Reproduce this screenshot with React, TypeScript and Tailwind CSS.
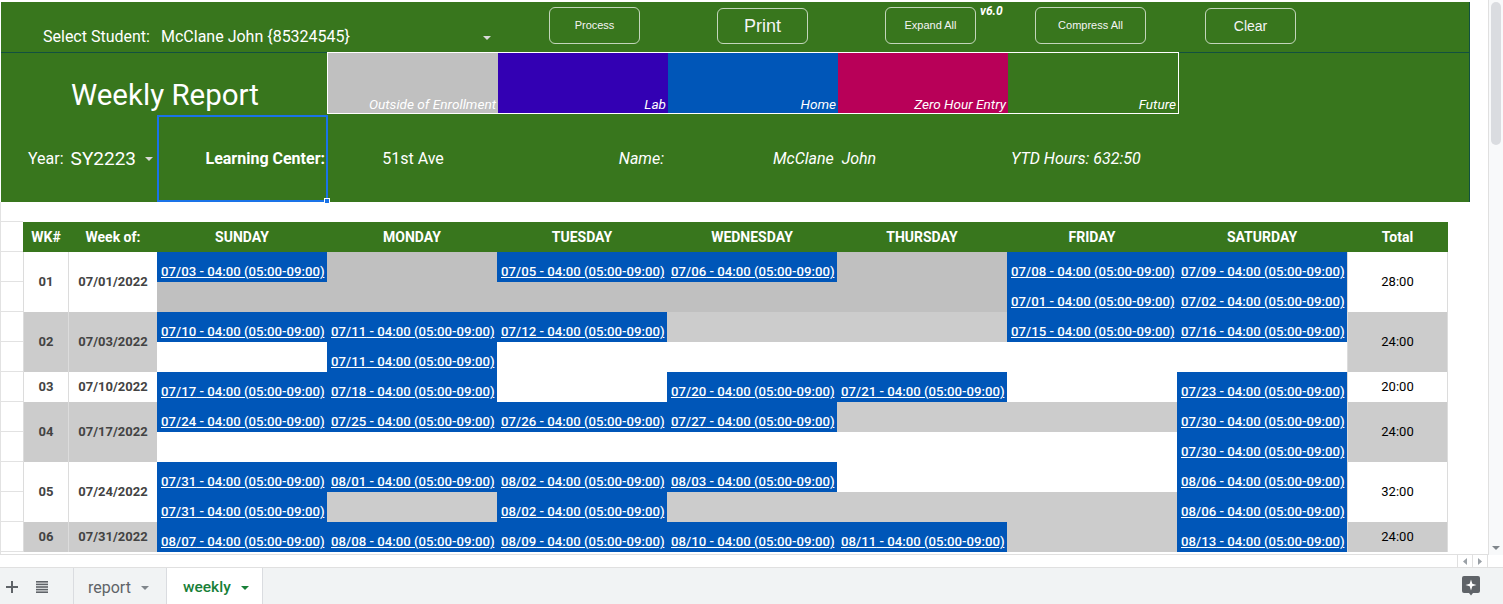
import React from "react";

// G = outside of enrollment, L = shaded row, W = blank, anything else is an entry date
type Cell = string;

interface Week {
  wk: string;
  of: string;
  total: string;
  shaded: boolean;
  rows: Cell[][];
}

const weeks: Week[] = [
  {
    wk: "01",
    of: "07/01/2022",
    total: "28:00",
    shaded: false,
    rows: [
      ["07/03", "G", "07/05", "07/06", "G", "07/08", "07/09"],
      ["G", "G", "G", "G", "G", "07/01", "07/02"],
    ],
  },
  {
    wk: "02",
    of: "07/03/2022",
    total: "24:00",
    shaded: true,
    rows: [
      ["07/10", "07/11", "07/12", "L", "L", "07/15", "07/16"],
      ["W", "07/11", "W", "W", "W", "W", "W"],
    ],
  },
  {
    wk: "03",
    of: "07/10/2022",
    total: "20:00",
    shaded: false,
    rows: [["07/17", "07/18", "W", "07/20", "07/21", "W", "07/23"]],
  },
  {
    wk: "04",
    of: "07/17/2022",
    total: "24:00",
    shaded: true,
    rows: [
      ["07/24", "07/25", "07/26", "07/27", "L", "L", "07/30"],
      ["W", "W", "W", "W", "W", "W", "07/30"],
    ],
  },
  {
    wk: "05",
    of: "07/24/2022",
    total: "32:00",
    shaded: false,
    rows: [
      ["07/31", "08/01", "08/02", "08/03", "W", "W", "08/06"],
      ["07/31", "L", "08/02", "L", "L", "L", "08/06"],
    ],
  },
  {
    wk: "06",
    of: "07/31/2022",
    total: "24:00",
    shaded: true,
    rows: [["08/07", "08/08", "08/09", "08/10", "08/11", "L", "08/13"]],
  },
];

const days = ["SUNDAY", "MONDAY", "TUESDAY", "WEDNESDAY", "THURSDAY", "FRIDAY", "SATURDAY"];

function Caret({ color = "#d9d9d9" }: { color?: string }) {
  return (
    <svg width="8" height="4" viewBox="0 0 8 4">
      <path d="M0 0h8L4 4z" fill={color} />
    </svg>
  );
}

function DayCell({ v }: { v: Cell }) {
  if (v === "G") return <div className="bg-[#c0c0c0]" />;
  if (v === "L") return <div className="bg-[#cccccc]" />;
  if (v === "W") return <div className="bg-white" />;
  return (
    <div className="bg-[#0056b8] flex items-end pl-[4px] pb-[2px]">
      <span className="text-white underline text-[13.2px] font-medium leading-[16px] whitespace-nowrap">
        {v} - 04:00 (05:00-09:00)
      </span>
    </div>
  );
}

function Btn({ label, className }: { label: string; className: string }) {
  return (
    <div
      className={`border border-white/70 rounded-[6px] flex items-center justify-center font-['Liberation_Sans',Arial,sans-serif] text-[#f4f4f4] ${className}`}
    >
      {label}
    </div>
  );
}

function Header() {
  return (
    <div className="ml-[1px] w-[1469px] bg-[#38761d] text-white border-r border-[#12503f]">
      {/* top row: student picker + buttons */}
      <div className="flex h-[50px] items-start">
        <div className="w-[158px] h-full flex items-end pb-[6px] pl-[42px] text-[16px] leading-[18px]">
          Select Student:
        </div>
        <div className="w-[340px] h-full flex items-end justify-between pb-[6px] pl-[2px] pr-[8px] text-[16px] leading-[18px]">
          <span>McClane John {"{85324545}"}</span>
          <span className="mb-[6px]">
            <Caret />
          </span>
        </div>
        <Btn label="Process" className="ml-[50px] mt-[5px] w-[91px] h-[37px] text-[11px]" />
        <Btn label="Print" className="ml-[77px] mt-[6px] w-[91px] h-[36px] text-[18px]" />
        <Btn label="Expand All" className="ml-[77px] mt-[5px] w-[91px] h-[37px] text-[11px]" />
        <div className="w-[59px] pl-[4px] pt-[2px] text-[12px] leading-[14px] font-bold italic">v6.0</div>
        <Btn label="Compress All" className="mt-[5px] w-[111px] h-[37px] text-[11px]" />
        <Btn label="Clear" className="ml-[59px] mt-[6px] w-[91px] h-[36px] text-[14px]" />
      </div>

      {/* title + legend */}
      <div className="flex h-[62px]">
        <div className="w-[326px] border-t border-[#12503f] flex items-end justify-center pb-[2px] pl-[2px] text-[29.5px] leading-[34px]">
          Weekly Report
        </div>
        <div className="w-[852px] border border-white flex italic text-[13.6px] leading-[16px]">
          <div className="w-[170px] bg-[#c0c0c0] flex items-end justify-end pr-[2px] pb-[1px]">Outside of Enrollment</div>
          <div className="w-[170px] bg-[#3300b3] flex items-end justify-end pr-[2px] pb-[1px]">Lab</div>
          <div className="w-[170px] bg-[#0056b8] flex items-end justify-end pr-[2px] pb-[1px]">Home</div>
          <div className="w-[170px] bg-[#b80058] flex items-end justify-end pr-[2px] pb-[1px]">Zero Hour Entry</div>
          <div className="w-[170px] bg-[#38761d] flex items-end justify-end pr-[2px] pb-[1px]">Future</div>
        </div>
        <div className="flex-1 border-t border-[#12503f]" />
      </div>

      {/* year / center / name */}
      <div className="flex h-[88px] items-center text-[16px] leading-[18px] pt-[1px]">
        <div className="w-[156px] flex items-center pl-[27px]">
          <span>Year:</span>
          <span className="ml-[7px] text-[19px] leading-[24px]">SY2223</span>
          <span className="ml-[9px]">
            <Caret />
          </span>
        </div>
        <div className="relative w-[171px] h-full border-2 border-[#1a73e8] flex items-center justify-end pr-[1px] font-bold">
          Learning Center:
          <div className="absolute right-[-4px] bottom-[-4px] w-[6px] h-[6px] bg-[#1a73e8] border border-white" />
        </div>
        <div className="w-[170px] text-center">51st Ave</div>
        <div className="w-[169px] text-right pr-[3px] italic">Name:</div>
        <div className="w-[340px] pl-[106px] italic whitespace-pre">McClane  John</div>
        <div className="pl-[4px] italic">YTD Hours: 632:50</div>
      </div>
    </div>
  );
}

function Table() {
  return (
    <div className="grid grid-cols-[46px_88px_repeat(7,170px)_101px] auto-rows-[30px]">
      <div className="bg-[#38761d] text-white font-bold text-[14px] flex items-center justify-center">WK#</div>
      <div className="bg-[#38761d] text-white font-bold text-[14px] flex items-center justify-center">Week of:</div>
      {days.map((d) => (
        <div key={d} className="bg-[#38761d] text-white font-bold text-[14px] flex items-center justify-center">
          {d}
        </div>
      ))}
      <div className="bg-[#38761d] text-white font-bold text-[14px] flex items-center justify-center">Total</div>

      {weeks.map((w) => {
        const span = w.rows.length === 2 ? "row-span-2" : "row-span-1";
        const bg = w.shaded ? "bg-[#cccccc]" : "bg-white";
        return (
          <React.Fragment key={w.wk}>
            <div className={`${span} ${bg} border-l border-r border-[#dcdcdc] flex items-center justify-center font-bold text-[13px] text-[#434343]`}>
              {w.wk}
            </div>
            <div className={`${span} ${bg} flex items-center justify-center font-bold text-[13px] text-[#434343]`}>
              {w.of}
            </div>
            {w.rows[0].map((c, i) => (
              <DayCell key={"a" + i} v={c} />
            ))}
            <div className={`${span} ${bg} border-l border-r border-[#dcdcdc] flex items-center justify-center text-[13px] text-black`}>
              {w.total}
            </div>
            {w.rows.length === 2 && w.rows[1].map((c, i) => <DayCell key={"b" + i} v={c} />)}
          </React.Fragment>
        );
      })}
    </div>
  );
}

export default function App() {
  const gutterRows = Array.from({ length: 12 });
  return (
    <div className="w-[1503px] h-[604px] bg-white overflow-hidden flex flex-col font-['Roboto',sans-serif]">
      <div className="flex h-[555px]">
        <div className="w-[1488px] overflow-hidden border-b border-[#e0e0e0]">
          <div className="h-[2px]" />
          <Header />
          <div className="flex">
            {/* column A gridlines */}
            <div className="w-[23px] border-l border-[#e2e2e2]">
              <div className="h-[20px] border-b border-[#e2e2e2]" />
              {gutterRows.map((_, i) => (
                <div key={i} className="h-[30px] border-b border-[#e2e2e2]" />
              ))}
            </div>
            <div>
              <div className="h-[20px]" />
              <Table />
            </div>
          </div>
        </div>
        {/* vertical scrollbar */}
        <div className="w-[15px] bg-[#f8f9fa] border-l border-[#e0e0e0] flex flex-col items-center justify-between pt-[2px] pb-[5px]">
          <div className="w-[10px] h-[143px] rounded-[5px] bg-[#dadce0]" />
          <Caret color="#80868b" />
        </div>
      </div>

      {/* horizontal scroll strip */}
      <div className="h-[12px] flex">
        <div className="flex-1" />
        <div className="w-[15px] border-l border-[#e0e0e0] flex items-center justify-center">
          <svg width="4" height="7" viewBox="0 0 4 7">
            <path d="M4 0v7L0 3.5z" fill="#9aa0a6" />
          </svg>
        </div>
        <div className="w-[16px] border-l border-r border-[#e0e0e0] flex items-center justify-center">
          <svg width="4" height="7" viewBox="0 0 4 7">
            <path d="M0 0v7l4-3.5z" fill="#9aa0a6" />
          </svg>
        </div>
        <div className="w-[15px]" />
      </div>

      {/* sheet tabs */}
      <div className="h-[37px] bg-[#f1f3f4] border-t border-[#e0e0e0] flex items-stretch">
        <div className="w-[23px] flex items-center justify-center pt-[2px]">
          <svg width="12" height="12" viewBox="0 0 12 12">
            <path d="M5 0h2v5h5v2H7v5H5V7H0V5h5z" fill="#5f6368" />
          </svg>
        </div>
        <div className="w-[38px] flex items-center justify-center pt-[2px]">
          <svg width="12" height="12" viewBox="0 0 12 12" fill="#5f6368">
            <rect x="0" y="0" width="12" height="1.6" />
            <rect x="0" y="2.6" width="12" height="1.6" />
            <rect x="0" y="5.2" width="12" height="1.6" />
            <rect x="0" y="7.8" width="12" height="1.6" />
            <rect x="0" y="10.4" width="12" height="1.6" />
          </svg>
        </div>
        <div className="w-[12px]" />
        <div className="w-[93px] border-l border-[#dadce0] flex items-center pl-[14px] pt-[3px] gap-[10px] text-[16px] text-[#5f6368]">
          report
          <Caret color="#80868b" />
        </div>
        <div className="w-[97px] bg-white border-l border-r border-[#dadce0] flex items-center pl-[16px] pt-[3px] gap-[10px] text-[15.5px] font-medium text-[#188038]">
          weekly
          <Caret color="#188038" />
        </div>
        <div className="flex-1" />
        <div className="w-[41px] flex items-center">
          <svg width="18" height="20" viewBox="0 0 18 20">
            <path
              d="M2 0h14a2 2 0 0 1 2 2v13a2 2 0 0 1-2 2h-5l-2 2.5-2-2.5H2a2 2 0 0 1-2-2V2a2 2 0 0 1 2-2z"
              fill="#5f6368"
            />
            <path d="M9 3.5l1.3 4.2 4.2 1.3-4.2 1.3L9 14.5l-1.3-4.2L3.5 9l4.2-1.3z" fill="#fff" />
          </svg>
        </div>
      </div>
    </div>
  );
}
